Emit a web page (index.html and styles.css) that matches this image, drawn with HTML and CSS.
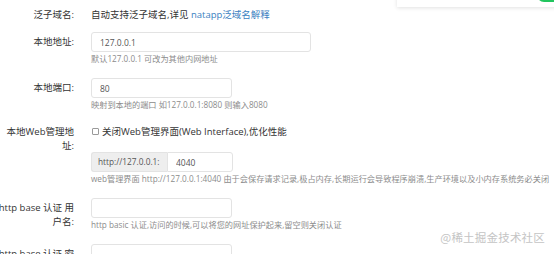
FILE: index.html
```html
<!DOCTYPE html>
<html lang="zh-CN">
<head>
<meta charset="utf-8">
<title>natapp 隧道配置</title>
<link rel="stylesheet" href="styles.css">
</head>
<body>
<div class="popover"><span class="popover-btn"></span></div>
<form class="form">
  <div class="row">
    <label class="label label-static">泛子域名:</label>
    <div class="ctl">
      <p class="static">自动支持泛子域名,详见 <a href="#" class="link">natapp泛域名解释</a></p>
    </div>
  </div>
  <div class="row">
    <label class="label">本地地址:</label>
    <div class="ctl">
      <input class="input input-wide" type="text" value="127.0.0.1">
      <p class="hint">默认127.0.0.1 可改为其他内网地址</p>
    </div>
  </div>
  <div class="row">
    <label class="label">本地端口:</label>
    <div class="ctl">
      <input class="input" type="text" value="80">
      <p class="hint">映射到本地的端口 如127.0.0.1:8080 则输入8080</p>
    </div>
  </div>
  <div class="row">
    <label class="label label-static label-two">本地Web管理地址:</label>
    <div class="ctl">
      <label class="check"><span class="box"></span>关闭Web管理界面(Web Interface),优化性能</label>
      <div class="group">
        <span class="addon">http://127.0.0.1:</span>
        <input class="input input-grp" type="text" value="4040">
      </div>
      <p class="hint">web管理界面 http://127.0.0.1:4040 由于会保存请求记录,极占内存,长期运行会导致程序崩溃,生产环境以及小内存系统务必关闭</p>
    </div>
  </div>
  <div class="row">
    <label class="label">http base 认证 用户名:</label>
    <div class="ctl">
      <input class="input" type="text" value="">
      <p class="hint">http basic 认证,访问的时候,可以将您的网址保护起来,留空则关闭认证</p>
    </div>
  </div>
  <div class="row">
    <label class="label">http base 认证 密码:</label>
    <div class="ctl">
      <input class="input" type="password" value="">
    </div>
  </div>
</form>
<div class="watermark">@稀土掘金技术社区</div>
</body>
</html>
```

FILE: styles.css
```css
html, body {
  margin: 0;
  padding: 0;
  background: #fff;
  overflow: hidden;
}
body {
  width: 554px;
  height: 254px;
  position: relative;
  font-family: "Open Sans", "Noto Sans CJK SC", sans-serif;
  font-size: 9.5px;
  color: #333;
}
.form {
  margin: 0 0 0 -3px;
  padding-top: 8px;
}
.row {
  display: grid;
  grid-template-columns: 77px 1fr;
  column-gap: 17px;
  margin-bottom: 13px;
}
.row:first-child {
  margin-bottom: 10px;
}
.label {
  text-align: right;
  line-height: 14px;
  padding-top: 3px;
  color: #333;
}
.label-static {
  padding-top: 0;
}
.label-two {
  padding-top: 1px;
}
.ctl {
  min-width: 0;
}
.static {
  margin: 0;
  line-height: 14px;
  white-space: nowrap;
}
.link {
  color: #3a7fc1;
  text-decoration: none;
}
.input {
  display: block;
  box-sizing: border-box;
  width: 141px;
  height: 20px;
  margin: 0;
  padding: 0 8px;
  border: 1px solid #e3e3e3;
  border-radius: 3px;
  background: #fff;
  font-family: inherit;
  font-size: 8.5px;
  color: #555;
  outline: none;
}
.input-wide {
  width: 220px;
}
.hint {
  margin: 1px 0 0;
  font-size: 8.2px;
  line-height: 12px;
  color: #8c8c8c;
  white-space: nowrap;
}
.check {
  display: flex;
  align-items: center;
  height: 14px;
  margin-bottom: 14px;
  white-space: nowrap;
}
.box {
  width: 7px;
  height: 7px;
  border: 1px solid #9a9a9a;
  border-radius: 1px;
  box-sizing: border-box;
  margin: 0 3px 0 1px;
}
.group {
  display: flex;
  width: 142px;
}
.addon {
  box-sizing: border-box;
  width: 76px;
  height: 20px;
  line-height: 18px;
  padding-left: 6px;
  background: #eee;
  border: 1px solid #e3e3e3;
  border-right: 0;
  border-radius: 3px 0 0 3px;
  font-size: 8.3px;
  color: #555;
  white-space: nowrap;
  overflow: hidden;
}
.input-grp {
  width: 66px;
  border-radius: 0 3px 3px 0;
}
.watermark {
  position: absolute;
  right: 9px;
  bottom: 9px;
  font-family: "Noto Sans CJK SC", sans-serif;
  font-size: 11.5px;
  color: #c4c4c4;
  letter-spacing: 0.2px;
}
.popover {
  position: absolute;
  left: 397px;
  top: -20px;
  width: 180px;
  height: 27px;
  background: #fff;
  box-shadow: 0 1px 4px rgba(0, 0, 0, 0.12);
}
.popover-btn {
  position: absolute;
  left: 140px;
  top: 8px;
  width: 40px;
  height: 14px;
  border-radius: 7px;
  background: #22c55e;
}
```
